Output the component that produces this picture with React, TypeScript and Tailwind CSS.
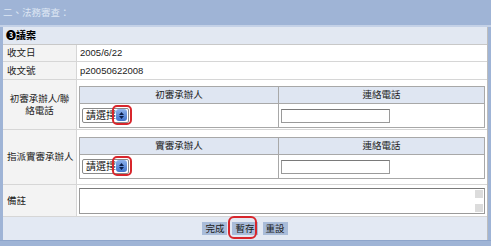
import React from "react";

function Select() {
  return (
    <div className="relative w-[47px] h-[15px]">
      <div className="w-full h-full border border-[#8a8a8a] bg-white flex items-center overflow-hidden rounded-[2px]">
        <span className="pl-[3px] whitespace-nowrap leading-none text-[10px] text-[#111]">請選擇</span>
      </div>
      <div className="absolute right-[2px] top-[1px] w-[11px] h-[12px] rounded-[3px] bg-gradient-to-b from-[#8fb3ec] to-[#3f72cc] flex flex-col items-center justify-center gap-[1px]">
        <svg width="5" height="3" viewBox="0 0 5 3"><path d="M0 3L2.5 0L5 3Z" fill="#0b1f4a" /></svg>
        <svg width="5" height="3" viewBox="0 0 5 3"><path d="M0 0L2.5 3L5 0Z" fill="#0b1f4a" /></svg>
      </div>
      <div className="absolute left-[30px] top-[-3px] w-[20px] h-[20px] rounded-[5px] border-2 border-[#d8262c]" />
    </div>
  );
}

function Nested({ title }: { title: string }) {
  return (
    <div className="border border-[#a8a8a8] flex flex-col">
      <div className="h-[17px] bg-[#dfe6f2] border-b border-[#a8a8a8] flex">
        <div className="w-[199px] border-r border-[#a8a8a8] flex items-center justify-center">{title}</div>
        <div className="flex-1 flex items-center justify-center">連絡電話</div>
      </div>
      <div className="h-[23px] flex bg-white">
        <div className="w-[199px] border-r border-[#a8a8a8] flex items-center pl-[2px]">
          <Select />
        </div>
        <div className="flex-1 flex items-center pl-[2px]">
          <div className="w-[109px] h-[14px] border border-[#9a9a9a] border-t-[#7a7a7a] bg-white" />
        </div>
      </div>
    </div>
  );
}

export default function App() {
  return (
    <div className="w-[491px] h-[246px] bg-[#9fb4d6] flex flex-col text-[9.5px] leading-none text-[#222] font-['Liberation_Sans','Noto_Sans_CJK_TC',sans-serif]">
      <div className="h-[25px] flex items-center pl-[3px] text-[#dde6f3] text-[9.5px]">二、法務審查：</div>
      <div className="h-[2px] bg-[#c4d1e7]" />
      <div className="mx-[3px] flex flex-col bg-white border-r border-[#bdbdbd]">
        <div className="h-[18px] bg-[#e2e8f2] border-b border-[#c8c8c8] flex items-center pl-[3px] font-bold text-[10px] text-black">
          ❸議案
        </div>
        <div className="h-[17px] flex border-b border-[#d6d6d6]">
          <div className="w-[74px] bg-[#f3f3f3] border-r border-[#d6d6d6] flex items-center pl-[4px]">收文日</div>
          <div className="flex-1 flex items-center pl-[3px]">2005/6/22</div>
        </div>
        <div className="h-[18px] flex border-b border-[#d6d6d6]">
          <div className="w-[74px] bg-[#f3f3f3] border-r border-[#d6d6d6] flex items-center pl-[4px]">收文號</div>
          <div className="flex-1 flex items-center pl-[3px]">p20050622008</div>
        </div>
        <div className="h-[50px] flex border-b border-[#d6d6d6]">
          <div className="w-[74px] bg-[#f3f3f3] border-r border-[#d6d6d6] flex items-center justify-center text-center leading-[12px]">
            初審承辦人/聯<br />絡電話
          </div>
          <div className="flex-1 pl-[2px] pr-[2px] pt-[6px]">
            <Nested title="初審承辦人" />
          </div>
        </div>
        <div className="h-[55px] flex border-b border-[#d6d6d6]">
          <div className="w-[74px] bg-[#f3f3f3] border-r border-[#d6d6d6] flex items-center pl-[4px]">指派實審承辦人</div>
          <div className="flex-1 pl-[2px] pr-[2px] pt-[7px]">
            <Nested title="實審承辦人" />
          </div>
        </div>
        <div className="h-[32px] flex border-b border-[#d6d6d6]">
          <div className="w-[74px] bg-[#f3f3f3] border-r border-[#d6d6d6] flex items-center pl-[4px]">備註</div>
          <div className="flex-1 pl-[2px] pr-[2px] flex items-center">
            <div className="w-full h-[26px] border border-[#9a9a9a] border-t-[#7a7a7a] bg-white relative">
              <div className="absolute right-[1px] top-[1px] w-[8px] h-[8px] bg-[#dcdcdc]" />
              <div className="absolute right-[1px] bottom-[1px] w-[8px] h-[8px] bg-[#dcdcdc]" />
            </div>
          </div>
        </div>
        <div className="h-[23px] bg-[#e3e9f3] flex items-center justify-center gap-[5px] text-[#1b1b1b]">
          <div className="h-[13px] px-[3px] bg-[#a9bcd9] flex items-center">完成</div>
          <div className="relative h-[13px] px-[3px] bg-[#a9bcd9] flex items-center">
            暫存
            <div className="absolute left-[-4px] top-[-6px] w-[29px] h-[23px] rounded-[6px] border-2 border-[#d8262c]" />
          </div>
          <div className="h-[13px] px-[3px] bg-[#a9bcd9] flex items-center">重設</div>
        </div>
      </div>
      <div className="h-[1px] bg-[#8ea5cb]" />
    </div>
  );
}
